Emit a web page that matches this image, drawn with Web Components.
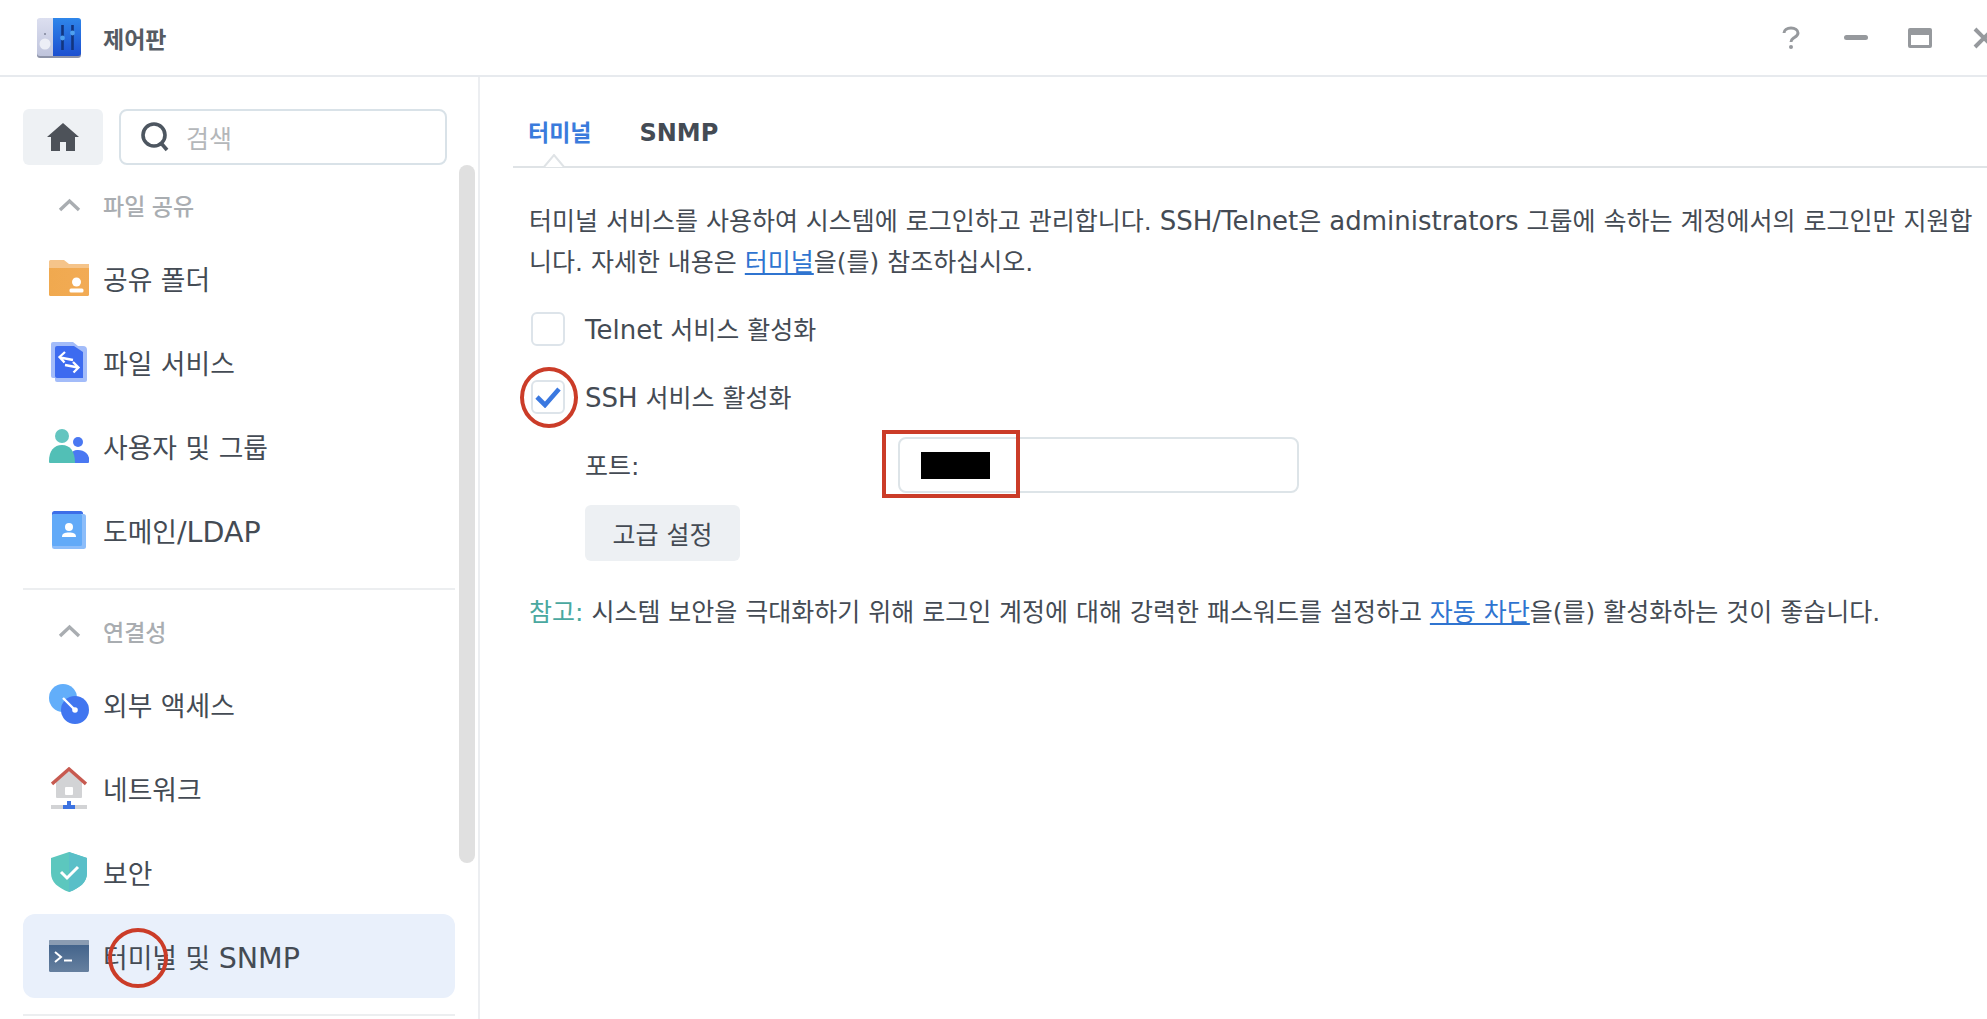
<!DOCTYPE html>
<html lang="ko">
<head>
<meta charset="utf-8">
<title>제어판</title>
<style>
  html, body { margin: 0; height: 100%; overflow: hidden; background: #fff; }
  body { font-family: "DejaVu Sans", "Noto Sans CJK KR", sans-serif; color: #444b54; }
  .en { font-size: 28.500px; }
</style>
</head>
<body>
<cp-window>
  <cp-header slot="header"></cp-header>
  <cp-sidebar slot="sidebar">
    <cp-section title="파일 공유">
      <cp-nav-item icon="folder">공유 폴더</cp-nav-item>
      <cp-nav-item icon="files">파일 서비스</cp-nav-item>
      <cp-nav-item icon="users">사용자 및 그룹</cp-nav-item>
      <cp-nav-item icon="domain">도메인<span class="en">/LDAP</span></cp-nav-item>
    </cp-section>
    <cp-section title="연결성">
      <cp-nav-item icon="external">외부 액세스</cp-nav-item>
      <cp-nav-item icon="network">네트워크</cp-nav-item>
      <cp-nav-item icon="shield">보안</cp-nav-item>
      <cp-nav-item icon="terminal" active>터미널 및 <span class="en">SNMP</span></cp-nav-item>
    </cp-section>
  </cp-sidebar>
  <cp-terminal-panel slot="content"></cp-terminal-panel>
</cp-window>

<script>
const ICONS = {
  folder: `<svg viewBox="0 0 40 36" width="40" height="36"><defs><linearGradient id="f" x1="0" x2="1"><stop offset="0" stop-color="#f0a94f"/><stop offset="1" stop-color="#f2ab55"/></linearGradient></defs>
    <path d="M0 1.500A1.500 1.500 0 0 1 1.500 0H15l5 4h20v6H0z" fill="#f5c48a"/><path d="M0 8h40v26.500a1.500 1.500 0 0 1-1.500 1.500H1.500A1.500 1.500 0 0 1 0 34.500z" fill="url(#f)"/>
    <circle cx="27.500" cy="22" r="4.500" fill="#fff"/><rect x="20.500" y="28.500" width="14" height="4" rx="1.500" fill="#fff"/></svg>`,
  files: `<svg viewBox="0 0 36 40" width="36" height="40"><path d="M4 4h28a4 4 0 0 1 4 4v30a2 2 0 0 1-2 2H6a2 2 0 0 1-2-2z" fill="#a3bcf9"/><path d="M2 0h20l10 8v26a2 2 0 0 1-2 2H2a2 2 0 0 1-2-2V2a2 2 0 0 1 2-2z" fill="#a3bcf9"/><path d="M6 4h17l9 6v26H6a2 2 0 0 1-2-2V6a2 2 0 0 1 2-2z" fill="#3d6bf0"/>
    <path d="M9 15.500 22 18M14 10 8.500 15l5 5.500M14 23l13 2.500M22 20l5.500 5.500-5 5" fill="none" stroke="#fff" stroke-width="2.300"/></svg>`,
  users: `<svg viewBox="0 0 40 34" width="40" height="34"><circle cx="29" cy="13" r="5" fill="#4a78f2"/><path d="M22 34V25a7 7 0 0 1 7-4 11 9 0 0 1 11 10v2a1 1 0 0 1-1 1z" fill="#4a78f2"/><circle cx="13" cy="7" r="7" fill="#63c5c0"/><path d="M0 32c0-10 5-16 13-16s13 6 13 18H1a1 1 0 0 1-1-1z" fill="#52bfb6"/></svg>`,
  domain: `<svg viewBox="0 0 34 38" width="34" height="38"><rect x="0" y="0" width="31" height="36" rx="2.500" fill="#3d6ee8"/><rect x="0" y="3" width="34" height="35" rx="2.500" fill="#8cbdfa"/><rect x="0" y="3" width="30" height="32" rx="1.500" fill="#62aaf8"/>
    <circle cx="17" cy="16" r="4" fill="#fff"/><path d="M10 26c0-3.500 2.500-4.500 7-4.500s7 1 7 4.500z" fill="#fff"/></svg>`,
  external: `<svg viewBox="0 0 40 40" width="40" height="40"><circle cx="14" cy="14" r="14" fill="#62aefa"/><circle cx="26" cy="26" r="14" fill="#4176f0"/><path d="M14 14 26 26" stroke="#fff" stroke-width="2.400"/><circle cx="26" cy="26" r="2.800" fill="#fff"/></svg>`,
  network: `<svg viewBox="0 0 36 42" width="36" height="42"><path d="M5 15 18 4l13 11v15a1 1 0 0 1-1 1H6a1 1 0 0 1-1-1z" fill="#d2d3d5"/><path d="M1 17 18 2l17 15" fill="none" stroke="#c75a50" stroke-width="3.400"/><rect x="14" y="20" width="8" height="8" rx="1" fill="#fff"/><rect x="0" y="38" width="36" height="4" fill="#d2d3d5"/><path d="M16 34h4v4h4v4H12v-4h4z" fill="#3d73e0"/></svg>`,
  shield: `<svg viewBox="0 0 36 40" width="36" height="40"><path d="M18 0 36 6v15c0 9-7 15-18 19C7 36 0 30 0 21V6z" fill="#5cc7be"/><path d="M18 0 36 6v15c0 9-7 15-18 19z" fill="#59bfc8"/><path d="M10 20l6 6 11-11" fill="none" stroke="#fff" stroke-width="3"/></svg>`,
  terminal: `<svg viewBox="0 0 40 32" width="40" height="32"><defs><linearGradient id="t" x1="0" x2="0" y1="0" y2="1"><stop offset="0" stop-color="#3d5f88"/><stop offset="1" stop-color="#66809f"/></linearGradient></defs><rect width="40" height="32" rx="1.500" fill="url(#t)"/><path d="M0 1.500A1.500 1.500 0 0 1 1.500 0h37A1.500 1.500 0 0 1 40 1.500V5H0z" fill="#8a9cb2"/>
    <path d="M6 12l6 5-6 5" fill="none" stroke="#fff" stroke-width="2"/><path d="M15 20.500h8" stroke="#fff" stroke-width="2"/></svg>`
};

class CpWindow extends HTMLElement {
  constructor() {
    super();
    this.attachShadow({ mode: "open" });
    this.shadowRoot.innerHTML = `
      <style>
        :host { display: grid; grid-template-columns: 480px 1fr; grid-template-rows: 77px 1fr; width: 1987px; height: 1019px; overflow: hidden; }
        ::slotted([slot=header]) { grid-column: 1 / 3; }
      </style>
      <slot name="header"></slot>
      <slot name="sidebar"></slot>
      <slot name="content"></slot>`;
  }
}

class CpHeader extends HTMLElement {
  constructor() {
    super();
    this.attachShadow({ mode: "open" });
    this.shadowRoot.innerHTML = `
      <style>
        :host { display: flex; align-items: center; padding: 0 0 0 37px; border-bottom: 2px solid #e7eaee; box-sizing: border-box; height: 77px; overflow: hidden; }
        .logo { display: block; margin-right: 22px; }
        h1 { margin: 0; font: 600 23px "Noto Sans CJK KR", sans-serif; color: #555b63; flex: 1; }
        .tools { display: flex; align-items: center; gap: 41px; margin-right: -8px; }
        svg { display: block; }
      </style>
      <svg class="logo" viewBox="0 0 44 40" width="44" height="40">
        <defs>
          <linearGradient id="lb" x1="0" x2="0" y1="0" y2="1"><stop offset="0" stop-color="#2f86ea"/><stop offset="1" stop-color="#1c4fd0"/></linearGradient>
          <linearGradient id="lg" x1="0" x2="0" y1="0" y2="1"><stop offset="0" stop-color="#dcdff0"/><stop offset="1" stop-color="#bfc4dc"/></linearGradient>
        </defs>
        <rect y="1" width="44" height="39" rx="3" fill="#8d93a8"/>
        <path d="M3 0h13v38H3a3 3 0 0 1-3-3V3a3 3 0 0 1 3-3z" fill="url(#lg)"/>
        <path d="M16 0h25a3 3 0 0 1 3 3v32a3 3 0 0 1-3 3H16z" fill="url(#lb)"/>
        <circle cx="8" cy="16" r="1" fill="#7f849a"/><circle cx="8" cy="26" r="5.500" fill="#eceef6"/>
        <path d="M25.500 7v25M35.500 7v25" stroke="#12357f" stroke-width="2.600"/>
        <circle cx="25.500" cy="20" r="2.400" fill="#4fa0ee"/><circle cx="35.500" cy="15" r="2.400" fill="#4fa0ee"/>
      </svg>
      <h1>제어판</h1>
      <div class="tools">
        <svg style="margin-right:3px" viewBox="0 0 18 24" width="18" height="24"><path d="M2 7c0-3 3-5 7-5s7 2 7 5-3 4-5 5.500c-1.500 1-2 2-2 3.500" fill="none" stroke="#96999d" stroke-width="3"/><circle cx="9" cy="21" r="2" fill="#96999d"/></svg>
        <svg style="margin-right:-1px" viewBox="0 0 24 6" width="24" height="6"><rect width="24" height="5" rx="2.500" fill="#96999d"/></svg>
        <svg viewBox="0 0 24 20" width="24" height="20"><path d="M2 0h20a2 2 0 0 1 2 2v16a2 2 0 0 1-2 2H2a2 2 0 0 1-2-2V2a2 2 0 0 1 2-2zm1 7v10h18V7z" fill="#96999d" fill-rule="evenodd"/></svg>
        <svg viewBox="0 0 22 22" width="22" height="22"><path d="M2 2l18 18M20 2 2 20" stroke="#96999d" stroke-width="4"/></svg>
      </div>`;
  }
}

class CpSidebar extends HTMLElement {
  constructor() {
    super();
    this.attachShadow({ mode: "open" });
    this.shadowRoot.innerHTML = `
      <style>
        :host { display: block; position: relative; box-sizing: border-box; height: 942px; padding: 32px 24px 0 23px; border-right: 2px solid #eceef1; overflow: hidden; }
        .top { display: flex; gap: 16px; width: 424px; margin-bottom: 12px; }
        .home { width: 80px; height: 56px; border-radius: 6px; background: #eef1f4; display: flex; align-items: center; justify-content: center; }
        .search { flex: 1; height: 56px; box-sizing: border-box; border: 2px solid #d9e2e8; border-radius: 8px; display: flex; align-items: center; padding-left: 20px; gap: 17px; font: 400 25px "Noto Sans CJK KR", sans-serif; color: #b4b7ba; }
        .bar { position: absolute; left: 459px; top: 88px; width: 16px; height: 698px; border-radius: 8px; background: #e0e0e0; }
        svg { display: block; }
      </style>
      <div class="top">
        <div class="home"><svg viewBox="0 0 32 28" width="32" height="28"><path d="M16 0 32 14h-4v14H19v-9h-6v9H4V14H0z" fill="#4d5259"/></svg></div>
        <div class="search">
          <svg viewBox="0 0 28 30" width="28" height="30"><circle cx="13" cy="13" r="11" fill="none" stroke="#4d5660" stroke-width="3.600"/><path d="M20 21l6 7" stroke="#4d5660" stroke-width="3.600"/></svg>
          <span>검색</span>
        </div>
      </div>
      <slot></slot>
      <div class="bar"></div>`;
  }
}

class CpSection extends HTMLElement {
  constructor() {
    super();
    this.attachShadow({ mode: "open" });
    this.shadowRoot.innerHTML = `
      <style>
        :host { display: block; width: 432px; border-bottom: 2px solid #eceef0; margin-bottom: 13px; padding-bottom: 16px; }
        .head { display: flex; align-items: center; height: 56px; padding-left: 35px; margin-bottom: 3px; gap: 22px; font: 500 23px "Noto Sans CJK KR", sans-serif; color: #a9adb1; }
      </style>
      <div class="head">
        <svg viewBox="0 0 23 14" width="23" height="14"><path d="M2 12 11.500 3 21 12" fill="none" stroke="#a9adb1" stroke-width="3.400"/></svg>
        <span></span>
      </div>
      <slot></slot>`;
    this.shadowRoot.querySelector("span").textContent = this.getAttribute("title");
  }
}

class CpNavItem extends HTMLElement {
  constructor() {
    super();
    this.attachShadow({ mode: "open" });
    this.shadowRoot.innerHTML = `
      <style>
        :host { display: flex; align-items: center; height: 84px; padding-left: 26px; gap: 14px; border-radius: 12px; font-size: 26.800px; color: #444b54; white-space: nowrap; }
        :host([active]) { background: #e9f0fb; }
        .icon { width: 40px; display: flex; justify-content: center; }
        svg { display: block; }
      </style>
      <span class="icon">${ICONS[this.getAttribute("icon")]}</span>
      <span><slot></slot></span>`;
  }
}

class CpCheck extends HTMLElement {
  constructor() {
    super();
    this.attachShadow({ mode: "open" });
    const on = this.hasAttribute("checked");
    this.shadowRoot.innerHTML = `
      <style>
        :host { display: flex; align-items: center; height: 36px; gap: 20px; padding-left: 2px; white-space: nowrap; }
        .box { width: 34px; height: 34px; box-sizing: border-box; border: 2px solid #dde4ea; border-radius: 6px; display: flex; align-items: center; justify-content: center; flex: none; }
        .label { padding-bottom: 2px; }
        svg { display: block; }
      </style>
      <span class="box">${on ? `<svg viewBox="0 0 26 22" width="26" height="22"><path d="M2 11l8 8L24 3" fill="none" stroke="#3a78e0" stroke-width="4.600"/></svg>` : ""}</span>
      <span class="label"><slot></slot></span>`;
  }
}

class CpTerminalPanel extends HTMLElement {
  constructor() {
    super();
    this.attachShadow({ mode: "open" });
    this.shadowRoot.innerHTML = `
      <style>
        :host { display: block; position: relative; box-sizing: border-box; padding: 0 0 0 33px; font-size: 25px; color: #444b54; height: 942px; overflow: hidden; }
        .tabs { display: flex; align-items: baseline; gap: 48px; height: 91px; padding: 37px 0 0 15px; box-sizing: border-box; border-bottom: 2px solid #dfe3e6; font-weight: 700; font-size: 24px; position: relative; }
        .tabs .on { color: #3a7bdc; font-size: 23px; }
        .tabs svg { position: absolute; left: 30px; bottom: -2px; }
        .body { padding: 33px 0 0 16px; }
        .en { font-size: 26px; }
        p { margin: 0; line-height: 41px; white-space: nowrap; }
        a { color: #2f74d0; text-decoration: underline; }
        .telnet { margin-top: 28px; }
        .ssh { margin-top: 32px; }
        .sub { padding-left: 56px; }
        .port { display: flex; align-items: center; margin-top: 22px; height: 56px; }
        .port label { width: 313px; padding-bottom: 2px; }
        .input { width: 401px; height: 56px; box-sizing: border-box; border: 2px solid #dde4e8; border-radius: 8px; padding-left: 21px; display: flex; align-items: center; }
        .mask { width: 69px; height: 27px; background: #000; }
        .btn { width: 155px; height: 56px; margin-top: 12px; border-radius: 6px; background: #edf0f3; display: flex; align-items: center; justify-content: center; }
        .note { margin-top: 31px; }
        .note b { font-weight: 400; color: #4aa8a0; }
        .mark { position: absolute; box-sizing: border-box; border: 4px solid #cb3c28; }
        .ring1 { left: 40px; top: 290px; width: 58px; height: 61px; border-radius: 50%; }
        .rect { left: 402px; top: 353px; width: 138px; height: 68px; }
      </style>
      <div class="tabs"><span class="on">터미널</span><span>SNMP</span>
        <svg viewBox="0 0 22 14" width="22" height="14"><path d="M0 13H1L11 1 21 13H22" fill="#fff" stroke="#dfe3e6" stroke-width="2"/></svg>
      </div>
      <div class="body">
        <p>터미널 서비스를 사용하여 시스템에 로그인하고 관리합니다. <span class="en">SSH/Telnet</span>은 <span class="en">administrators</span> 그룹에 속하는 계정에서의 로그인만 지원합<br>니다. 자세한 내용은 <a>터미널</a>을(를) 참조하십시오.</p>
        <cp-check class="telnet"><span class="en">Telnet</span> 서비스 활성화</cp-check>
        <cp-check class="ssh" checked><span class="en">SSH</span> 서비스 활성화</cp-check>
        <div class="sub">
          <div class="port"><label>포트:</label><div class="input"><div class="mask"></div></div></div>
          <div class="btn">고급 설정</div>
        </div>
        <p class="note"><b>참고:</b> 시스템 보안을 극대화하기 위해 로그인 계정에 대해 강력한 패스워드를 설정하고 <a>자동 차단</a>을(를) 활성화하는 것이 좋습니다.</p>
      </div>
      <div class="mark ring1"></div>
      <div class="mark rect"></div>`;
  }
}

class CpCircleMark extends HTMLElement {
  constructor() {
    super();
    this.attachShadow({ mode: "open" });
    this.shadowRoot.innerHTML = `
      <style>
        :host { position: absolute; left: 108px; top: 928px; width: 60px; height: 60px; box-sizing: border-box; border: 4px solid #cb3c28; border-radius: 50%; }
      </style>`;
  }
}

customElements.define("cp-window", CpWindow);
customElements.define("cp-header", CpHeader);
customElements.define("cp-sidebar", CpSidebar);
customElements.define("cp-section", CpSection);
customElements.define("cp-nav-item", CpNavItem);
customElements.define("cp-check", CpCheck);
customElements.define("cp-terminal-panel", CpTerminalPanel);
customElements.define("cp-circle-mark", CpCircleMark);
document.body.appendChild(document.createElement("cp-circle-mark"));
</script>
</body>
</html>
